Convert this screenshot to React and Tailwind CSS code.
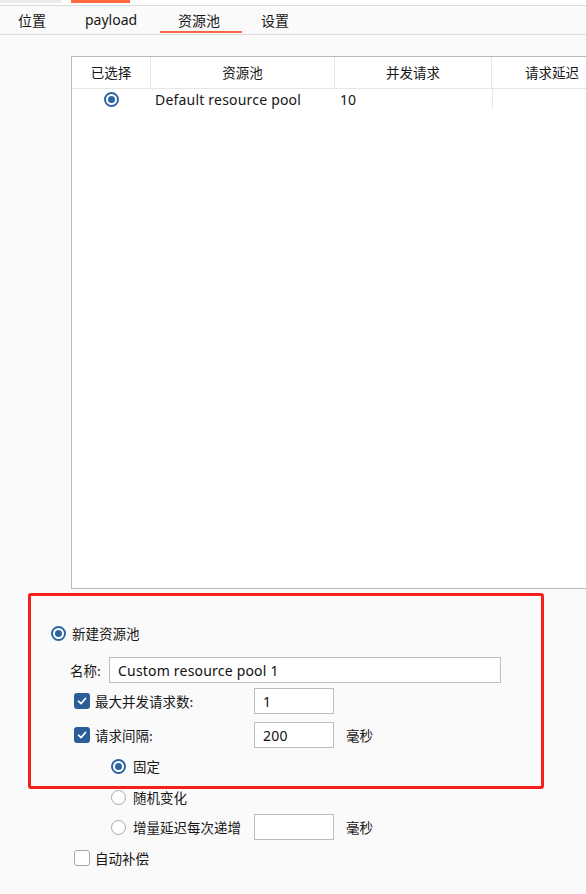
import React from "react";

const font = { fontFamily: '"Noto Sans CJK SC", "Noto Sans", sans-serif' };
const latin = { fontFamily: '"Noto Sans", "Noto Sans CJK SC", sans-serif' };

function Radio({ checked }) {
  return (
    <span
      className={`flex h-[15px] w-[15px] shrink-0 items-center justify-center rounded-full bg-white ${
        checked ? "border-2 border-[#2b65a3]" : "border border-[#a8a8a8]"
      }`}
    >
      {checked && <span className="h-[7px] w-[7px] rounded-full bg-[#2b65a3]" />}
    </span>
  );
}

function Check({ checked }) {
  if (!checked) {
    return <span className="h-[16px] w-[16px] shrink-0 rounded-[3px] border border-[#a8a8a8] bg-white" />;
  }
  return (
    <span className="flex h-[16px] w-[16px] shrink-0 items-center justify-center rounded-[3px] bg-[#2a5e98]">
      <svg width="10" height="10" viewBox="0 0 10 10" fill="none">
        <path d="M1.5 5.2 L4 7.6 L8.6 2.4" stroke="white" strokeWidth="1.6" strokeLinecap="round" strokeLinejoin="round" />
      </svg>
    </span>
  );
}

function Field({ className, value }) {
  return (
    <div
      className={`flex h-[26px] items-center border border-[#bdbdbd] bg-white px-[8px] text-[14px] tracking-[0.2px] text-[#111] ${className}`}
      style={latin}
    >
      {value}
    </div>
  );
}

const tabs = [
  { label: "位置", cls: "pl-[18px] w-[63px]" },
  { label: "payload", cls: "pl-[22px] w-[97px]", latin: true },
  { label: "资源池", cls: "pl-[18px] w-[82px]", active: true },
  { label: "设置", cls: "pl-[19px] w-[70px]" },
];

const cols = [
  { label: "已选择", w: "w-[79px]" },
  { label: "资源池", w: "w-[184px]" },
  { label: "并发请求", w: "w-[157px]" },
  { label: "请求延迟", w: "w-[120px]" },
];

export default function App() {
  return (
    <div className="relative h-[894px] w-[586px] overflow-hidden bg-[#fafafa] text-[#161616]" style={font}>
      {/* top strip */}
      <div className="flex h-[6px] border-b border-[#d9dcdc] bg-white">
        <div className="h-[3px] w-[62px] rounded-br-[4px] bg-[#ebebeb]" />
        <div className="ml-[9px] h-[3px] w-[59px] bg-[#ff6a3d]" />
      </div>

      {/* tabs */}
      <div className="flex h-[29px] border-b border-[#dedede] bg-[#fafafa] text-[14px]">
        {tabs.map((t) => (
          <div key={t.label} className={`relative flex items-center ${t.cls}`}>
            <span className="leading-none" style={t.latin ? latin : undefined}>{t.label}</span>
            {t.active && <span className="absolute bottom-[1px] left-0 h-[2px] w-full bg-[#f36a3e]" />}
          </div>
        ))}
      </div>

      {/* table */}
      <div className="ml-[71px] mt-[21px] h-[533px] w-[540px] border border-r-0 border-[#bababa] bg-white text-[13.5px]">
        <div className="flex h-[32px] border-b border-[#e6e6e6]">
          {cols.map((c, i) => (
            <div
              key={c.label}
              className={`flex shrink-0 items-center justify-center ${c.w} ${i < cols.length - 1 ? "border-r border-[#e6e6e6]" : ""}`}
            >
              {c.label}
            </div>
          ))}
        </div>
        <div className="flex h-[20px] items-center">
          <div className="flex w-[79px] shrink-0 justify-center">
            <Radio checked />
          </div>
          <div className="w-[184px] shrink-0 pl-[4px] text-[14px] tracking-[0.2px]" style={latin}>Default resource pool</div>
          <div className="w-[157px] shrink-0 pl-[5px] text-[14px]" style={latin}>10</div>
          <div className="h-full w-[120px] border-l border-[#e6e6e6]" />
        </div>
      </div>

      {/* form */}
      <div className="flex flex-col pt-[31px] text-[13.5px]">
        <div className="flex h-[26px] items-center gap-[6px] pl-[51px]">
          <Radio checked />
          <span>新建资源池</span>
        </div>

        <div className="mt-[11px] flex h-[26px] items-center pl-[70px]">
          <span className="w-[39px]">名称:</span>
          <Field className="w-[392px]" value="Custom resource pool 1" />
        </div>

        <div className="mt-[5px] flex h-[26px] items-center pl-[74px]">
          <div className="flex w-[180px] items-center gap-[5px]">
            <Check checked />
            <span>最大并发请求数:</span>
          </div>
          <Field className="w-[80px]" value="1" />
        </div>

        <div className="mt-[8px] flex h-[26px] items-center pl-[74px]">
          <div className="flex w-[180px] items-center gap-[5px]">
            <Check checked />
            <span>请求间隔:</span>
          </div>
          <Field className="w-[80px]" value="200" />
          <span className="ml-[12px]">毫秒</span>
        </div>

        <div className="mt-[5px] flex h-[26px] items-center gap-[7px] pl-[111px]">
          <Radio checked />
          <span>固定</span>
        </div>

        <div className="mt-[5px] flex h-[26px] items-center gap-[7px] pl-[111px]">
          <Radio />
          <span>随机变化</span>
        </div>

        <div className="mt-[4px] flex h-[26px] items-center pl-[111px]">
          <div className="flex w-[143px] items-center gap-[7px]">
            <Radio />
            <span>增量延迟每次递增</span>
          </div>
          <Field className="w-[80px]" value="" />
          <span className="ml-[12px]">毫秒</span>
        </div>

        <div className="mt-[5px] flex h-[26px] items-center gap-[5px] pl-[74px]">
          <Check />
          <span>自动补偿</span>
        </div>
      </div>

      {/* highlight annotation */}
      <div className="pointer-events-none absolute left-[28px] top-[593px] h-[196px] w-[516px] rounded-[3px] border-[3px] border-[#f6201a]" />
    </div>
  );
}
